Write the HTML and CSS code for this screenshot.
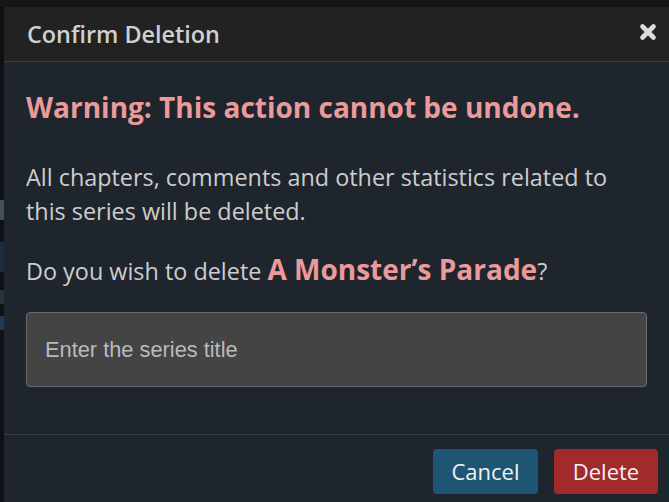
FILE: index.html
```html
<!DOCTYPE html>
<html>
<head>
<meta charset="utf-8">
<link rel="stylesheet" href="styles.css">
</head>
<body>
<div class="page">
  <div class="backdrop-strip">
    <div class="bit bit-a"></div>
    <div class="bit bit-b"></div>
    <div class="bit bit-c"></div>
    <div class="bit bit-d"></div>
  </div>
  <div class="modal">
    <div class="modal-header">
      <h4 class="modal-title">Confirm Deletion</h4>
      <button class="close" aria-label="Close">
        <svg width="18" height="18" viewBox="0 0 18 18"><path d="M3.5 3.5 L14.5 14.5 M14.5 3.5 L3.5 14.5" stroke="#dcdcdc" stroke-width="4.6" stroke-linecap="round"/></svg>
      </button>
    </div>
    <div class="modal-body">
      <h3 class="warning">Warning: This action cannot be undone.</h3>
      <p class="text">All chapters, comments and other statistics related to this series will be deleted.</p>
      <p class="text question">Do you wish to delete <strong class="series">A Monster’s Parade</strong>?</p>
      <input class="title-input" type="text" placeholder="Enter the series title">
    </div>
    <div class="modal-footer">
      <button class="btn btn-cancel">Cancel</button>
      <button class="btn btn-delete">Delete</button>
    </div>
  </div>
</div>
</body>
</html>
```
FILE: styles.css
```css
html, body {
  margin: 0;
  padding: 0;
  height: 100%;
  overflow: hidden;
  background: #141516;
}
.page {
  display: flex;
  height: 100%;
  padding-top: 7px;
  box-sizing: border-box;
}
.backdrop-strip {
  width: 4px;
  flex: none;
  background: #0d1114;
  display: flex;
  flex-direction: column;
}
.bit { width: 4px; }
.bit-a { margin-top: 193px; height: 20px; background: #4a4f55; }
.bit-b { margin-top: 22px; height: 30px; background: #1d2c3d; }
.bit-c { margin-top: 18px; height: 14px; background: #2c3136; }
.bit-d { margin-top: 12px; height: 14px; background: #1d3a52; }
.modal {
  width: 690px;
  flex: none;
  background: #1f252c;
  font-family: "Open Sans", sans-serif;
  color: #cfcfcf;
}
.modal-header {
  height: 55px;
  background: #222222;
  border-bottom: 1px solid #3a3e42;
  display: flex;
  align-items: center;
  box-sizing: border-box;
  padding: 0 0 0 23px;
}
.modal-title {
  margin: 0;
  font-size: 23.4px;
  font-weight: 600;
  color: #cfd0d1;
  flex: 1;
}
.close {
  background: none;
  border: 0;
  padding: 0;
  margin-right: 37px;
  display: flex;
  margin-top: -5px;
}
.modal-body {
  padding: 26px 0 0 22px;
  width: 622px;
}
.warning {
  margin: 0;
  font-size: 28px;
  font-weight: 700;
  color: #ea9a9a;
  line-height: 38px;
}
.text {
  margin: 34px 0 0;
  font-size: 23.4px;
  line-height: 34px;
  color: #cdcdcd;
}
.question {
  margin-top: 24px;
}
.series {
  font-size: 28px;
  font-weight: 700;
  line-height: 34px;
  color: #ea9a9a;
}
.title-input {
  display: block;
  margin-top: 24px;
  width: 621px;
  height: 75px;
  box-sizing: border-box;
  background: #444444;
  border: 1px solid #666a6e;
  border-radius: 4px;
  padding: 0 18px;
  font-family: "Liberation Sans", Arial, sans-serif;
  font-size: 21.8px;
  color: #ddd;
}
.title-input::placeholder { color: #bababa; }
.modal-footer {
  margin-top: 47px;
  border-top: 1px solid #383d42;
  display: flex;
  padding: 14px 0 0 429px;
  gap: 16px;
}
.btn {
  height: 45px;
  border: 0;
  border-radius: 4px;
  font-family: "Open Sans", sans-serif;
  font-size: 22px;
  line-height: 42px;
  color: #f2f2f2;
  padding: 0 0 2px;
}
.btn-cancel { width: 105px; background: #1f5574; }
.btn-delete { width: 104px; background: #a12a2b; }
```
